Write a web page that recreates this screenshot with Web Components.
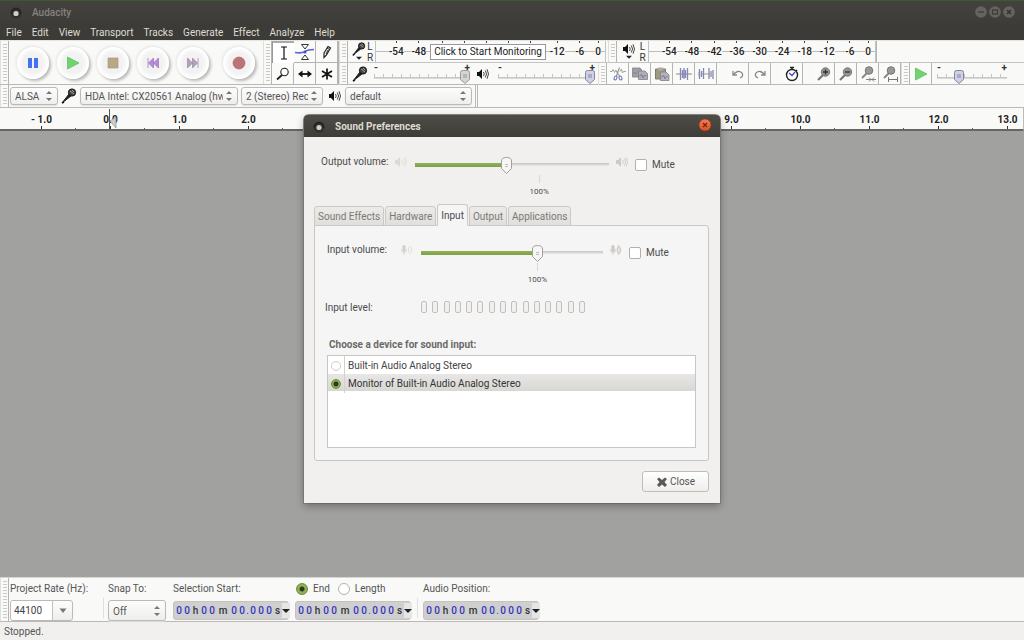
<!DOCTYPE html>
<html lang="en">
<head>
<meta charset="utf-8">
<title>Audacity</title>
<style>
html, body { margin: 0; height: 100%; }
body { font: 10px/12px Roboto, "Open Sans", sans-serif; color: #4c4c4c; background: #a1a1a0; }
</style>
</head>
<body>
<audacity-app></audacity-app>
<script>
const define = (name, css, html) => customElements.define(name, class extends HTMLElement {
  connectedCallback() {
    if (this.shadowRoot) return;
    const root = this.attachShadow({ mode: 'open' });
    const t = document.createElement('template');
    t.innerHTML = '<style>*{box-sizing:border-box}' + css + '</style>' + (typeof html === 'function' ? html(this) : html);
    root.append(t.content.cloneNode(true));
  }
});
const cssSvg = s => "url(\"data:image/svg+xml," + encodeURIComponent(s) + "\")";

/* ---------- icons ---------- */
const ICONS = {
  mic: [16, 16, '<path d="M1 15 8 6l2 2Z" fill="#222" stroke="#222"/><circle cx="11" cy="4.500" r="3.600" fill="#444" stroke="#111"/><path d="m9 3 4 3M11 2l2 2" stroke="#bbb" stroke-width=".8"/><path d="m1 15 2-1" stroke="#111" stroke-width="1.500"/>'],
  speaker: [12, 12, '<path d="M0 4h2l3-3v10L2 8H0Z" fill="#111"/><path d="M6.500 4q1.500 2 0 4M8.300 2.500q2.500 3.500 0 7M10 1.200q3 4.800 0 9.600" fill="none" stroke="#333" stroke-width=".9"/>'],
  faintSpeaker: [12, 12, '<path d="M0 4h2l3-3v10L2 8H0Z" fill="#dbd9d5"/><path d="M6.500 4q1.500 2 0 4M8.300 2.500q2.500 3.500 0 7M10 1.200q3 4.800 0 9.600" fill="none" stroke="#e2e0dc"/>'],
  loudSpeaker: [12, 12, '<path d="M0 4h2l3-3v10L2 8H0Z" fill="#cecbc6"/><path d="M6.500 4q1.500 2 0 4M8.300 2.500q2.500 3.500 0 7M10 1.200q3 4.800 0 9.600" fill="none" stroke="#d2cfca"/>'],
  faintMic: [12, 12, '<rect x="1.500" y="1" width="3" height="7" rx="1.500" fill="#d2cfc9"/><path d="M.5 5q0 4 2.500 4t2.500-4M3 9v2" fill="none" stroke="#dcd9d3"/><path d="M8 3q-1.500 3 0 6M8.500 2q4.500 4 0 8" fill="none" stroke="#e2e0dc"/>'],
  loudMic: [12, 12, '<rect x="1.500" y="1" width="3" height="7" rx="1.500" fill="#ccc8c1"/><path d="M.5 5q0 4 2.500 4t2.500-4M3 9v2" fill="none" stroke="#d6d2cb"/><path d="M8.500 1.500q-3 4.500 0 9 4.500-4.500 0-9Z" fill="#e6e4e0" stroke="#c9c5be"/>'],
  pause: [14, 14, '<path d="M2 2h4v10H2zM8 2h4v10H8z" fill="#4573ef"/>'],
  play: [14, 14, '<path d="M1.500 1 13 7 1.500 13Z" fill="#6fd66f" stroke="#57b957" stroke-width=".7"/>'],
  stop: [14, 14, '<path d="M2 2h10v10H2z" fill="#b9a886" stroke="#ab9a78" stroke-width=".7"/>'],
  prev: [14, 14, '<path d="M2 2v10M7.500 2v10L2.500 7ZM12.500 2v10L7.500 7Z" fill="#b58ad6" stroke="#a078bd" stroke-width=".8"/>'],
  next: [14, 14, '<path d="M12 2v10M6.500 2v10l5-5ZM1.500 2v10l5-5Z" fill="#b3a0bb" stroke="#9f8ea8" stroke-width=".8"/>'],
  record: [14, 14, '<circle cx="7" cy="7" r="6" fill="#bd7276" stroke="#b0666b" stroke-width=".7"/>'],
  ibeam: [16, 16, '<path d="M5 2h2.500l.5.500.5-.5H11M8 2v12M5 14h2.500l.5-.5.5.500H11" fill="none" stroke="#111" stroke-width="1.200"/>'],
  envelope: [20, 18, '<path d="M6.500 1.500h7L10 6ZM6.500 16.500h7L10 12Z" fill="#fff" stroke="#333"/><path d="M0 9.500q7 1 10-1t9-2" fill="none" stroke="#5b64df" stroke-width="1.600"/><circle cx="10" cy="9" r="1.500" fill="#4a50cc"/>'],
  pencil: [16, 16, '<path d="m5 9 4-6.500 2.500 1.500-4 7-2.500 2.500Z" fill="#fff" stroke="#222" stroke-width="1.200"/><path d="m8 4 2.500 1.500M7 10l2-4" stroke="#222"/>'],
  lens: [16, 16, '<circle cx="9.500" cy="6" r="3.700" fill="#fff" stroke="#222" stroke-width="1.100"/><path d="m7 9-5 4.500" stroke="#222" stroke-width="1.800"/>'],
  shift: [16, 16, '<path d="M4 8h8" stroke="#111" stroke-width="1.800"/><path d="m1 8 4.500-3.500v7ZM15 8l-4.500-3.500v7Z" fill="#111"/>'],
  star: [16, 16, '<path d="M8 2.500v11M3 5l10 6M13 5 3 11" stroke="#111" stroke-width="1.700"/>'],
  cut: [16, 16, '<path d="M0 5.500h2l1-2 1.500 3 1-2M10 5.500l1.500-2.500 1 4 1-1.500H16" stroke="#999" stroke-width=".9"/><path d="m9.500 1.500-3 8.500M5.500 4l4 6" stroke="#999" stroke-width="1.200"/><ellipse cx="5.500" cy="12" rx="1.400" ry="2" transform="rotate(25 5.500 12)" stroke="#6668b8"/><ellipse cx="10.500" cy="12" rx="1.400" ry="2" transform="rotate(-25 10.500 12)" stroke="#6668b8"/>'],
  copy: [16, 16, '<path d="M.5 2H8l1.500 1.500V11h-9z" fill="#a0a0a0" stroke="#808080" stroke-width=".8"/><path d="M6.500 5H13l2.500 2.500V13.500h-9z" fill="#b0b0b4" stroke="#808080" stroke-width=".8"/><path d="M1 7h4M7.500 10h1l1-2 1.500 4 1.500-3 1 1h1" stroke="#7a7ab8"/>'],
  paste: [16, 16, '<path d="M1.500 3h10v10h-10z" fill="#9d9a80" stroke="#7c7b70"/><path d="M4 1.500h5v3H4z" fill="#aaa"/><path d="M6.500 6H12l3 3v5.500H6.500z" fill="#b4b4b8" stroke="#808080" stroke-width=".8"/><path d="M7.500 11h1l1-2 1.500 4 1.500-3 1 1" stroke="#7a7ab8"/>'],
  trim: [16, 16, '<path d="M0 8h16" stroke="#888"/><path d="M4.500 2v12M11.500 2v12M6.500 4v8M8 2v11M9.500 4v8" stroke="#8587b5" stroke-width="1.300"/>'],
  silence: [16, 16, '<path d="M4 8h8M0 6v4" stroke="#999"/><path d="M1.500 3v10M3.500 5v6M5.500 2v11M11 2v11M13 5v6M15 4v9" stroke="#8587b5" stroke-width="1.300"/>'],
  undo: [16, 16, '<path d="M3 9q5-6 9-2 2 3-2 5M3 5v4h4" fill="none" stroke="#888" stroke-width="1.300"/>'],
  redo: [16, 16, '<path d="M13 9Q8 3 4 7q-2 3 2 5M13 5v4H9" fill="none" stroke="#888" stroke-width="1.300"/>'],
  clock: [16, 16, '<circle cx="8" cy="9" r="5.500" fill="#fff" stroke="#222" stroke-width="1.400"/><path d="M6 1.500h4M8 1v3M12 4l1 1" stroke="#222" stroke-width="1.500"/><path d="m5 7 3 2.500L11 6" fill="none" stroke="#4549d0" stroke-width="1.300"/>'],
  zoomIn: [16, 16, '<path d="m8 8-6 6" stroke="#777" stroke-width="2.200"/><circle cx="9.500" cy="6" r="4.200" fill="#959595" stroke="#777"/><path d="M7 6h5M9.500 3.500v5" stroke="#333" stroke-width="1.300"/>'],
  zoomOut: [16, 16, '<path d="m8 8-6 6" stroke="#777" stroke-width="2.200"/><circle cx="9.500" cy="6" r="4.200" fill="#959595" stroke="#777"/><path d="M7 6h5" stroke="#333" stroke-width="1.300"/>'],
  zoomSel: [16, 16, '<path d="m8 6-6 6" stroke="#888" stroke-width="2"/><circle cx="9" cy="4.500" r="3.800" fill="#999" stroke="#777"/><path d="M6 13.500h10M9 11.500l2 2-2 2M14 11.500l-2 2 2 2" fill="none" stroke="#777" stroke-width=".9"/>'],
  zoomFit: [16, 16, '<path d="m8 6-6 6" stroke="#888" stroke-width="2"/><circle cx="9" cy="4.500" r="3.800" fill="#999" stroke="#777"/><path d="M6.500 13.500h9M6.500 11v5M15.500 11v5" fill="none" stroke="#777"/>'],
  app: [14, 14, '<circle cx="7" cy="7" r="5.500" fill="#32312d"/><path d="M2.500 8V7a4.500 4.500 0 0 1 9 0v1" fill="none" stroke="#23221f" stroke-width="1.500"/><circle cx="7" cy="7.500" r="2.600" fill="#cfcdc8"/>'],
  min: [12, 12, '<circle cx="6" cy="6" r="5.800" fill="#66645f"/><path d="M3 6h6" stroke="#3b3a36" stroke-width="1.200"/>'],
  max: [12, 12, '<circle cx="6" cy="6" r="5.800" fill="#66645f"/><rect x="3.500" y="4" width="5" height="4" fill="none" stroke="#3b3a36" stroke-width="1.200"/>'],
  shut: [12, 12, '<circle cx="6" cy="6" r="5.800" fill="#66645f"/><path d="m4 4 4 4M8 4 4 8" stroke="#34332f" stroke-width="1.600"/>'],
  close: [14, 14, '<defs><linearGradient id="g" x2="0" y2="1"><stop stop-color="#f37d54"/><stop offset="1" stop-color="#e2501f"/></linearGradient></defs><circle cx="7" cy="7" r="6" fill="url(#g)" stroke="#8d3a1e" stroke-width=".6"/><path d="m5 5 4 4M9 5 5 9" stroke="#6b2410" stroke-width="1.200"/>'],
  cross: [12, 12, '<path d="M3 1.500 6 4l3-2.500L11 3 8.500 6 11 9l-2 2-3-2.500L3 11 1 9l2.500-3L1 3Z" fill="#5a5a5a"/>'],
  down: [8, 6, '<path d="M0 1h8L4 5Z" fill="#222"/>'],
  grayDown: [8, 6, '<path d="M.5.500h7L4 5Z" fill="#777"/>'],
  cursor: [8, 12, '<path d="M7 0v11L1 4Z" fill="#ccc" stroke="#999" stroke-width=".8"/>']
};
define('ui-icon', ':host{display:inline-flex;flex:none}svg{display:block}', el => {
  const [w, h, body] = ICONS[el.getAttribute('name')];
  const s = Number(el.getAttribute('scale') || 1);
  return `<svg width="${w * s}" height="${h * s}" viewBox="0 0 ${w} ${h}" fill="none" aria-hidden="true">${body}</svg>`;
});

/* ---------- toolbar parts ---------- */
define('tool-grip', `:host{display:block;flex:none;width:9px;border-right:1px solid #b4b4b2;border-left:1px solid #dededc;padding:3px 1px}
  div{height:100%;width:4px;margin-left:1px;background:repeating-linear-gradient(#c9c9c7 0 1px,transparent 1px 3px)}`, '<div></div>');

define('round-button', `:host{display:block;flex:none}
  button{display:grid;place-items:center;width:32px;height:32px;padding:0;border:0;border-radius:50%;background:radial-gradient(#f2f2f2 45%,#fefefe 65%);box-shadow:2px 2px 3px #b9b9b9,-1px -1px 3px #e4e4e4}`,
  el => `<button aria-label="${el.getAttribute('label')}"><ui-icon name="${el.getAttribute('icon')}"></ui-icon></button>`);

define('tool-cell', `:host{display:block;flex:none;width:22px;height:22px}
  :host([gap]){margin-left:10px}
  button{display:grid;place-items:center;width:100%;height:100%;padding:0;border:0;border-right:1px solid #b5b5b3;border-bottom:1px solid #b5b5b3;background:#fafaf9;overflow:hidden}
  :host([pressed]) button{border:0;border-left:1px solid #999;border-top:2px solid #aaa;background:#fff}`,
  el => `<button aria-label="${el.getAttribute('label')}"><ui-icon name="${el.getAttribute('icon')}"></ui-icon></button>`);

define('select-box', `:host{display:block;flex:none;height:18px}
  div{position:relative;height:100%}
  select{appearance:none;width:100%;height:100%;margin:0;padding:2px 14px 0 4px;border:1px solid #bcbab6;border-radius:3px;background:linear-gradient(#fdfdfd,#efeeed);box-shadow:0 1px 1px #e0e0de;font:inherit;color:#555;text-overflow:clip;overflow:hidden}
  svg{position:absolute;right:6px;top:0;bottom:0;margin:auto;pointer-events:none}`,
  el => `<div><select aria-label="${el.getAttribute('label')}"><option>${el.textContent}</option></select><svg width="6" height="10" viewBox="0 0 6 10" aria-hidden="true"><path d="M0 3h6L3 0ZM0 7h6l-3 3Z" fill="#777"/></svg></div>`);

const railThumb = (a, b) => cssSvg(`<svg xmlns="http://www.w3.org/2000/svg" width="10" height="14"><path d="M.5 2.500q0-2 2-2h5q2 0 2 2v7L5 13.500.5 9.500Z" fill="${a}" stroke="${b}"/><path d="M3 5h4M3 7h4" stroke="${b}"/></svg>`);
define('rail-slider', `:host{display:flex;flex-direction:column;flex:none;height:18px}
  div{display:flex;justify-content:space-between;height:5px;line-height:5px;font-weight:700;color:#333}
  input{appearance:none;display:block;width:100%;height:13px;margin:0;padding:0;background:
    linear-gradient(#c6c6c4,#c6c6c4) 0 7px/100% 1px no-repeat,
    linear-gradient(#d9d9d7,#d9d9d7) 0 8px/100% 1px no-repeat,
    repeating-linear-gradient(90deg,#c4c4c2 0 1px,transparent 1px 9px) 0 4px/100% 3px no-repeat}
  input::-webkit-slider-thumb{appearance:none;width:10px;height:14px;background:${railThumb('#d5d5d2', '#999')} no-repeat}
  :host([live]) input::-webkit-slider-thumb{background:${railThumb('#cfd0ea', '#85868f')} no-repeat}`,
  el => `<div><span>-</span><span>+</span></div><input type="range" aria-label="${el.getAttribute('label')}" min="0" max="100" value="${el.getAttribute('value')}">`);

define('level-meter', `:host{display:flex;flex:none;height:21px}
  .ch{display:flex;flex-direction:column;align-items:center;justify-content:center;flex:none;padding-left:4px}
  :host([output]) .ch{padding-left:6px}
  .lr{flex:none;display:flex;flex-direction:column;width:8px;line-height:11px;color:#333;text-align:center}
  :host([output]) .lr{width:12px;padding-left:3px}
  .scale{flex:1;display:flex;margin-left:1px;padding-left:9px;border-left:1px solid #c2c2c0;border-right:1px solid #c2c2c0;background:linear-gradient(#bcbcba,#bcbcba) 0 10px/100% 1px no-repeat}
  .scale span{flex:1;display:flex;align-items:center;justify-content:center;color:#222;background:linear-gradient(#444,#444) 50% 0/1px 2px no-repeat}
  .scale span:last-child{flex:none;width:14px}
  b{font-weight:500;background:#f9f9f8}
  .hint{display:flex;align-items:center;background:repeating-linear-gradient(90deg,#444 0 1px,transparent 1px 22px) 12px 0/100% 2px no-repeat}
  button{flex:none;height:16px;padding:0 3px;border:1px solid #999;background:#fff;font:inherit;color:#222;white-space:nowrap}`,
  el => {
    const out = el.hasAttribute('output');
    const n = a => a.map(v => `<span><b>${v}</b></span>`).join('');
    return `<div class="ch"><ui-icon name="${out ? 'speaker' : 'mic'}" scale="${out ? 1 : .875}"></ui-icon><ui-icon name="down" scale="0.750"></ui-icon></div><div class="lr"><span>L</span><span>R</span></div><div class="scale">` +
      (out ? n([-54, -48, -42, -36, -30, -24, -18, -12, -6, 0]) : n([-54, -48]) + '<div class="hint"><button>Click to Start Monitoring</button></div>' + n([-12, -6, 0])) + '</div>';
  });

/* ---------- main window bars ---------- */
define('title-bar', `:host{display:flex;align-items:center;height:24px;padding:1px 9px 0;border-top:1px solid #3f5a28;background:linear-gradient(#43423e,#3d3c38);color:#85837d;font-weight:500}
  span{margin-left:9px;flex:1}button{border:0;background:none;padding:0;margin:0 0 0 2px;display:block}`,
  `<ui-icon name="app"></ui-icon><span>Audacity</span><button aria-label="Minimize"><ui-icon name="min"></ui-icon></button><button aria-label="Maximize"><ui-icon name="max"></ui-icon></button><button aria-label="Close window"><ui-icon name="shut"></ui-icon></button>`);

define('menu-bar', `:host{display:flex;gap:10px;height:16px;padding-left:6px;background:#3c3b37}
  button{border:0;background:none;padding:1px 0 0;font:inherit;line-height:16px;color:#dfdbd2}`,
  ['File', 'Edit', 'View', 'Transport', 'Tracks', 'Generate', 'Effect', 'Analyze', 'Help'].map(m => `<button>${m}</button>`).join(''));

const cells = list => list.map(([i, l, a = '']) => `<tool-cell icon="${i}" label="${l}" ${a}></tool-cell>`).join('');
define('tool-dock', `:host{display:block;background:#f9f9f8;border-top:1px solid #e4e4e2}
  .top{display:flex;height:44px;border-bottom:1px solid #b9b9b7}
  .transport{display:flex;align-items:center;gap:8px;padding:0 8px}
  .transport :last-child{margin-left:6px}
  .tools{display:grid;grid-template-columns:22px 22px 22px;border-right:1px solid #b4b4b2}
  .right{flex:1;min-width:0}
  .line{display:flex;height:22px;align-items:center}
  .line>tool-grip{align-self:stretch}
  .line:first-child{border-bottom:1px solid #c4c4c2}
  .line ui-icon{margin:0 6px 0 4px}
  .rec{width:258px}.play{width:260px;border-right:1px solid #b4b4b2}
  .device{display:flex;align-items:center;height:23px;border-bottom:1px solid #b9b9b7}
  .device>tool-grip{align-self:stretch}
  .end{width:3px;align-self:stretch;margin-left:3px;border:solid #b9b9b7;border-width:0 1px}`,
  `<div class="top"><tool-grip></tool-grip><div class="transport">
    <round-button icon="pause" label="Pause"></round-button><round-button icon="play" label="Play"></round-button><round-button icon="stop" label="Stop"></round-button><round-button icon="prev" label="Skip to start"></round-button><round-button icon="next" label="Skip to end"></round-button><round-button icon="record" label="Record"></round-button></div>
    <tool-grip></tool-grip><div class="tools">${cells([['ibeam', 'Selection', 'pressed'], ['envelope', 'Envelope'], ['pencil', 'Draw'], ['lens', 'Zoom'], ['shift', 'Time shift'], ['star', 'Multi-tool']])}</div>
    <div class="right"><div class="line"><tool-grip></tool-grip><level-meter class="rec"></level-meter><tool-grip style="margin-left:2px"></tool-grip><level-meter class="play" output></level-meter></div>
    <div class="line"><tool-grip></tool-grip><ui-icon name="mic"></ui-icon><rail-slider style="width:96px" value="100" label="Recording volume"></rail-slider><ui-icon name="speaker" style="margin-left:7px;margin-right:9px"></ui-icon><rail-slider live style="width:97px" value="100" label="Playback volume"></rail-slider><tool-grip style="margin-left:3px"></tool-grip>
    ${cells([['cut', 'Cut'], ['copy', 'Copy'], ['paste', 'Paste'], ['trim', 'Trim'], ['silence', 'Silence'], ['undo', 'Undo', 'gap'], ['redo', 'Redo'], ['clock', 'Sync lock', 'gap'], ['zoomIn', 'Zoom in', 'gap'], ['zoomOut', 'Zoom out'], ['zoomSel', 'Fit selection'], ['zoomFit', 'Fit project']])}
    <tool-grip></tool-grip>${cells([['play', 'Play at speed']])}<rail-slider live style="width:70px;margin-left:5px" value="28" label="Playback speed"></rail-slider></div></div></div>
  <div class="device"><tool-grip></tool-grip><select-box label="Audio host" style="width:48px;margin-left:1px">ALSA</select-box><ui-icon name="mic" style="margin:0 3px"></ui-icon><select-box label="Recording device" style="width:158px">HDA Intel: CX20561 Analog (hw:0,0)</select-box><select-box label="Recording channels" style="width:82px;margin-left:3px">2 (Stereo) Recording</select-box><ui-icon name="speaker" style="margin:0 4px 0 6px"></ui-icon><select-box label="Playback device" style="width:127px">default</select-box><div class="end"></div></div>`);

/* Seconds 3 to 8 lie under the dialog, so their cells carry ticks only. */
define('time-ruler', `:host{display:flex;height:23px;padding-left:7px;overflow:hidden;background:#f9f9f8;border-bottom:2px solid #666;border-right:1px solid #bbb}
  span{position:relative;flex:none;width:69px;text-align:center;line-height:23px;font-weight:700;color:#222;background:linear-gradient(#333,#333) 50% 100%/1px 3px no-repeat,linear-gradient(#555,#555) 100% 100%/1px 1px no-repeat}
  i{position:absolute;left:33px;top:1px;bottom:0;width:1px;background:#555}
  ui-icon{position:absolute;left:33px;bottom:0}`,
  Array.from({ length: 15 }, (_, k) => k - 1).map(v => `<span>${v < 0 ? '- 1.0' : v > 2 && v < 9 ? '' : v + '.0'}${v === 0 ? '<i></i><ui-icon name="cursor"></ui-icon>' : ''}</span>`).join(''));

/* ---------- bottom bar ---------- */
define('time-field', `:host{display:flex;align-items:center;width:116px;height:19px;padding:0 1px;border:1px solid #c4c2be;border-radius:3px;background:#cfcfcf;color:#333;box-sizing:border-box}
  span{width:8px;text-align:center;flex:none}.d{color:#3434c0;font-weight:500}.p{width:3px;color:#3434c0}.m{width:14px}.u{width:9px;font-weight:500}.m{font-weight:500}
  button{margin-left:auto;width:8px;height:15px;padding:0;border:0;background:#e6e6e6;display:grid;place-items:center}`,
  [...'00h00m00.000s'].map(c => `<span class="${c === '.' ? 'p' : c === 'm' ? 'm' : /\d/.test(c) ? 'd' : 'u'}">${c}</span>`).join('') + '<button aria-label="Format"><ui-icon name="down"></ui-icon></button>');

const RADIO = `input[type=radio]{appearance:none;flex:none;width:12px;height:12px;margin:0;border:1px solid #b5b3af;border-radius:50%;background:#fff}
  input[type=radio]:checked{border-color:#6d8a40;background:radial-gradient(circle,#2e3a1c 0 2px,#8fb158 3px)}`;
define('selection-bar', `:host{display:flex;height:45px;background:#f9f9f8;border-top:1px solid #d5d5d3;border-bottom:1px solid #b9b9b7;color:#555}
  ${RADIO}
  .col{display:flex;flex-direction:column;gap:5px;padding-top:4px}
  .col>label,.row{height:13px;line-height:13px}
  .row{display:flex;align-items:center;padding-left:1px}
  .row label{margin:0 8px 0 5px}
  .combo{display:flex;width:63px;height:21px;border:1px solid #bcbab6;border-radius:3px;background:linear-gradient(#fdfdfd,#efeeed)}
  .combo input{width:42px;min-width:0;border:0;border-right:1px solid #c4c2be;border-radius:3px 0 0 3px;padding:0 3px;font:inherit;color:#444;background:#fff}
  .combo button{flex:1;border:0;background:none;padding:0;display:grid;place-items:center}
  .sep{width:1px;margin:20px 0 3px;background:#e0e0de}
  time-field{margin-top:1px}`,
  `<tool-grip></tool-grip>
  <div class="col" style="width:94px;padding-left:1px"><label for="rate">Project Rate (Hz):</label><div class="combo"><input id="rate" value="44100"><button aria-label="Rates"><ui-icon name="grayDown"></ui-icon></button></div></div>
  <div class="sep"></div>
  <div class="col" style="width:68px;padding-left:4px"><label>Snap To:</label><select-box label="Snap To" style="height:21px;width:58px">Off</select-box></div>
  <div class="col" style="width:123px;padding-left:1px"><label>Selection Start:</label><time-field></time-field></div>
  <div class="col" style="width:122px"><div class="row"><input type="radio" name="m" id="end" checked><label for="end">End</label><input type="radio" name="m" id="len"><label for="len">Length</label></div><time-field></time-field></div>
  <div class="sep"></div>
  <div class="col" style="padding-left:5px"><label>Audio Position:</label><time-field></time-field></div>`);

define('status-bar', ':host{display:block;height:18px;line-height:20px;padding-left:4px;background:#f1f0ee;color:#555}', 'Stopped.');

/* ---------- sound preferences ---------- */
const knob = cssSvg('<svg xmlns="http://www.w3.org/2000/svg" width="11" height="17"><path d="M.5 4Q.5.500 5.500.500t5 3.500v7.500l-5 5-5-5Z" fill="#f6f6f5" stroke="#a19f9b"/><path d="M4 7.500h3M4 9.500h3" stroke="#bbb"/></svg>');
define('volume-row', `:host{display:flex;align-items:flex-start;height:44px}
  .l{flex:none;width:74px;line-height:14px}
  .s{flex:1;margin:0 7px 0 8px;display:flex;flex-direction:column}
  input[type=range]{appearance:none;display:block;width:100%;height:18px;margin:1px 0 0;background:
    linear-gradient(#8fb158,#7f9f4a) 0 7px/var(--fill) 4px no-repeat,linear-gradient(#c5c3c0,#eceae8) 0 7px/100% 3px no-repeat}
  input[type=range]::-webkit-slider-thumb{appearance:none;width:11px;height:17px;background:${knob} no-repeat}
  .mark{margin-left:64%;width:0;display:flex;flex-direction:column;align-items:center;font-size:8px;line-height:10px}
  .mark i{width:1px;height:8px;margin:1px 0 4px;background:#d9d7d4}
  .mute{display:flex;align-items:center;gap:5px;width:var(--mute,67px);margin:3px 0 0 7px;line-height:14px}
  .mute input{appearance:none;width:12px;height:12px;margin:0;border:1px solid #b5afa8;border-radius:2px;background:#fff}
  ui-icon{margin-top:1px}`,
  el => {
    const k = el.getAttribute('kind');
    return `<label class="l" for="v">${el.textContent}</label><ui-icon name="faint${k}"></ui-icon><div class="s" style="--fill:${el.getAttribute('value')}%"><input id="v" type="range" min="0" max="100" value="${el.getAttribute('value')}"><div class="mark"><i></i><output>100%</output></div></div><ui-icon name="loud${k}"></ui-icon><label class="mute"><input type="checkbox">Mute</label>`;
  });

define('level-row', `:host{display:flex;align-items:center;height:14px}
  span{width:96px;flex:none;padding-top:1px}div{display:flex;justify-content:space-between;width:164px}
  i{width:6px;height:12px;border:1px solid #c3bfba;border-radius:2px;background:#f2f0ee}`,
  `<span>Input level:</span><div>${'<i></i>'.repeat(15)}</div>`);

define('tab-strip', `:host{display:flex;align-items:flex-end;gap:1px;height:21px;margin-bottom:-1px;position:relative}
  button{height:20px;padding:1px 3px 0;border:1px solid #cbc9c5;border-radius:3px 3px 0 0;background:linear-gradient(#ecebe9,#e0dfdc);font:inherit;color:#7a7976}
  button[aria-selected=true]{height:22px;border-bottom-color:#f5f5f5;background:#f5f5f5;color:#4c4c4c}`,
  ['Sound Effects', 'Hardware', 'Input', 'Output', 'Applications'].map(t => `<button role="tab" aria-selected="${t === 'Input'}">${t}</button>`).join(''));

define('device-list', `:host{display:block;height:93px;border:1px solid #c8c6c3;background:#fff;color:#444}
  ${RADIO}
  input[type=radio]{width:10px;height:10px;border-color:#ccc}
  label{display:grid;grid-template-columns:16px 1fr;height:18px;align-items:center}
  label+label{height:17px;background:linear-gradient(#e8e7e5,#d9d7d4);color:#333}
  b{font-weight:400;height:100%;border-left:1px solid #d3d1ce;padding-left:3px;line-height:19px}
  input{justify-self:center}`,
  `<label><input type="radio" name="dev"><b>Built-in Audio Analog Stereo</b></label><label><input type="radio" name="dev" checked><b>Monitor of Built-in Audio Analog Stereo</b></label>`);

define('sound-dialog', `:host{display:block;background:#f1f0ee;border-radius:5px 5px 0 0;box-shadow:0 3px 8px #0005,0 0 0 1px #8e8c88}
  header{display:flex;align-items:center;height:22px;padding:1px 8px 0;border-radius:4px 4px 0 0;background:linear-gradient(#4e4d47,#3d3c38);color:#dfdbd2;font-weight:700}
  header span{flex:1;margin-left:9px}
  header button{display:block;border:0;background:none;padding:0}
  .body{padding:18px 11px 11px 10px}
  .out{padding:0 0 6px 7px;--mute:74px}
  .panel{height:236px;padding:17px 12px 12px;border:1px solid #c9c7c3;border-radius:0 3px 3px 3px;background:#f5f5f5;display:flex;flex-direction:column}
  .panel level-row{margin:13px 0 25px -2px}
  h2{margin:0 0 4px 2px;font:700 10px/12px Roboto,sans-serif;color:#6a6966}
  .act{display:flex;justify-content:flex-end;padding-top:10px}
  .act button{display:flex;align-items:center;justify-content:center;gap:2px;width:67px;height:21px;padding:0;border:1px solid #bfbdb9;border-radius:3px;background:linear-gradient(#fff,#efeeec);font:inherit;color:#555}`,
  `<header><ui-icon name="app"></ui-icon><span>Sound Preferences</span><button aria-label="Close dialog"><ui-icon name="close"></ui-icon></button></header>
  <div class="body"><div class="out"><volume-row kind="Speaker" value="47">Output volume:</volume-row></div>
  <tab-strip role="tablist"></tab-strip>
  <div class="panel"><volume-row kind="Mic" value="65">Input volume:</volume-row><level-row></level-row><h2>Choose a device for sound input:</h2><device-list></device-list></div>
  <div class="act"><button><ui-icon name="cross"></ui-icon>Close</button></div></div>`);

define('audacity-app', `:host{display:flex;flex-direction:column;min-height:100vh;position:relative;overflow:hidden}
  main{flex:1;background:#a1a1a0}
  sound-dialog{position:absolute;top:115px;left:0;right:0;margin:auto;width:416px}`,
  `<title-bar></title-bar><menu-bar></menu-bar><tool-dock></tool-dock><time-ruler></time-ruler><main></main><selection-bar></selection-bar><status-bar></status-bar><sound-dialog role="dialog"></sound-dialog>`);
</script>
</body>
</html>
